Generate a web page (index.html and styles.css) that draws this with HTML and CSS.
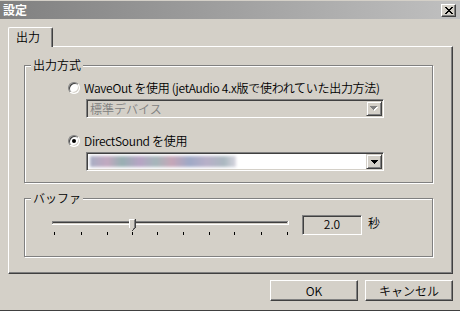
FILE: index.html
```html
<!DOCTYPE html>
<html lang="ja">
<head>
  <meta charset="UTF-8">
  <title>設定</title>
  <link rel="stylesheet" href="styles.css">
</head>
<body>
  <div class="window">
    <div class="titlebar">
      <span class="title">設定</span>
      <span class="close">
        <svg width="8" height="7" viewBox="0 0 8 7" shape-rendering="crispEdges">
          <path d="M0 0h2v1h-2zM6 0h2v1h-2zM1 1h2v1h-2zM5 1h2v1h-2zM2 2h4v1h-4zM3 3h2v1h-2zM2 4h4v1h-4zM1 5h2v1h-2zM5 5h2v1h-2zM0 6h2v1h-2zM6 6h2v1h-2z" fill="#000"/>
        </svg>
      </span>
    </div>
    <div class="content">
      <div class="tabs">
        <div class="tab">出力</div>
      </div>
      <div class="panel">
        <div class="group group-output">
          <span class="group-title">出力方式</span>
          <label class="radio-row"><span class="radio"></span>WaveOut を使用 (jetAudio 4.x版で使われていた出力方法)</label>
          <div class="combo disabled">
            <span class="combo-text">標準デバイス</span>
            <span class="combo-btn">
              <svg width="8" height="5" viewBox="0 0 8 5" shape-rendering="crispEdges">
                <path d="M1 1h7v1h-7zM2 2h5v1h-5zM3 3h3v1h-3zM4 4h1v1h-1z" fill="#fff"/>
                <path d="M0 0h7v1h-7zM1 1h5v1h-5zM2 2h3v1h-3zM3 3h1v1h-1z" fill="#808080"/>
              </svg>
            </span>
          </div>
          <label class="radio-row second"><span class="radio checked"></span>DirectSound を使用</label>
          <div class="combo">
            <span class="combo-text"><span class="blur"></span></span>
            <span class="combo-btn">
              <svg width="7" height="4" viewBox="0 0 7 4" shape-rendering="crispEdges">
                <path d="M0 0h7v1h-7zM1 1h5v1h-5zM2 2h3v1h-3zM3 3h1v1h-1z" fill="#000"/>
              </svg>
            </span>
          </div>
        </div>
        <div class="group group-buffer">
          <span class="group-title">バッファ</span>
          <div class="buffer-row">
            <svg class="slider" width="240" height="22" viewBox="0 0 240 22" shape-rendering="crispEdges">
              <rect x="2" y="5" width="236" height="1" fill="#808080"/>
              <rect x="2" y="5" width="1" height="4" fill="#808080"/>
              <rect x="3" y="6" width="234" height="1" fill="#404040"/>
              <rect x="2" y="8" width="237" height="1" fill="#fff"/>
              <rect x="238" y="5" width="1" height="4" fill="#fff"/>
              <path d="M79 3h6v8l-3 3l-3-3z" fill="#d4d0c8"/>
              <path d="M79 3h5v1h-4v8h-1z" fill="#fff"/>
              <path d="M85 3h1v9h-1zM84 12h1v1h-1zM83 13h1v1h-1zM82 14h1v1h-1z" fill="#404040"/>
              <path d="M84 4h1v8h-1zM83 12h1v1h-1z" fill="#808080"/>
              <g fill="#000">
                <rect x="4" y="16" width="1" height="3"/>
                <rect x="31" y="16" width="1" height="3"/>
                <rect x="57" y="16" width="1" height="3"/>
                <rect x="82" y="16" width="1" height="3"/>
                <rect x="107" y="16" width="1" height="3"/>
                <rect x="133" y="16" width="1" height="3"/>
                <rect x="159" y="16" width="1" height="3"/>
                <rect x="184" y="16" width="1" height="3"/>
                <rect x="211" y="16" width="1" height="3"/>
                <rect x="237" y="16" width="1" height="3"/>
              </g>
            </svg>
            <div class="edit">2.0</div>
            <span class="unit">秒</span>
          </div>
        </div>
      </div>
      <div class="buttons">
        <button class="btn">OK</button>
        <button class="btn">キャンセル</button>
      </div>
    </div>
  </div>
</body>
</html>
```

FILE: styles.css
```css
body {
  margin: 0;
  background: #d4d0c8;
  font-family: "Noto Sans CJK JP", sans-serif;
  font-size: 12px;
  font-weight: 350;
  color: #000;
}
.window {
  width: 460px;
  height: 310px;
  box-sizing: border-box;
  border-bottom: 1px solid #404040;
}
.titlebar {
  margin-top: 1px;
  height: 18px;
  display: flex;
  align-items: center;
  justify-content: space-between;
  padding: 0 4px 0 3px;
  background: linear-gradient(90deg, #808080, #c0c0c0);
}
.title {
  color: #fff;
  font-weight: bold;
  line-height: 18px;
}
.close {
  width: 15px;
  height: 13px;
  box-sizing: border-box;
  display: flex;
  align-items: center;
  justify-content: center;
  background: #d4d0c8;
  border: 1px solid;
  border-color: #fff #404040 #404040 #fff;
  box-shadow: inset -1px -1px #808080;
}
.content {
  padding: 8px 7px 0 8px;
}
.tabs {
  display: flex;
}
.tab {
  position: relative;
  z-index: 1;
  width: 45px;
  height: 20px;
  box-sizing: border-box;
  margin-bottom: -1px;
  padding-left: 7px;
  line-height: 18px;
  background: #d4d0c8;
  border: 1px solid;
  border-color: #fff #404040 transparent #fff;
  border-bottom: none;
  border-radius: 2px 2px 0 0;
  box-shadow: inset -1px 0 #808080;
}
.panel {
  height: 228px;
  box-sizing: border-box;
  padding: 18px 0 0 15px;
  border: 1px solid;
  border-color: #fff #404040 #404040 #fff;
  box-shadow: inset -1px -1px #808080;
}
.group {
  position: relative;
  width: 409px;
  box-sizing: border-box;
  border: 1px solid #808080;
  box-shadow: inset 1px 1px #fff, 1px 1px #fff;
}
.group-output {
  height: 118px;
  padding-top: 15px;
}
.group-buffer {
  height: 59px;
  margin-top: 15px;
  padding-top: 16px;
}
.group-title {
  position: absolute;
  top: -8px;
  left: 6px;
  padding: 0 2px;
  line-height: 14px;
  background: #d4d0c8;
}
.radio-row {
  display: flex;
  align-items: center;
  gap: 4px;
  height: 14px;
  line-height: 14px;
  margin-left: 43px;
  letter-spacing: -0.3px;
}
.radio-row.second {
  margin-top: 16px;
}
.radio {
  position: relative;
  width: 12px;
  height: 12px;
  box-sizing: border-box;
  border-radius: 50%;
  background: #fff;
  border: 1px solid;
  border-color: #808080 #fff #fff #808080;
  box-shadow: inset 1px 1px #404040, inset -1px -1px #d4d0c8;
}
.radio.checked::after {
  content: "";
  position: absolute;
  top: 3px;
  left: 3px;
  width: 4px;
  height: 4px;
  border-radius: 50%;
  background: #000;
}
.combo {
  display: flex;
  width: 298px;
  height: 19px;
  box-sizing: border-box;
  margin: 4px 0 0 61px;
  padding: 1px;
  background: #fff;
  border: 1px solid;
  border-color: #808080 #fff #fff #808080;
  box-shadow: inset 1px 1px #404040, inset -1px -1px #d4d0c8;
}
.combo.disabled {
  background: #d4d0c8;
  color: #808080;
}
.combo-text {
  flex: 1;
  padding-left: 2px;
  line-height: 15px;
  overflow: hidden;
}
.blur {
  display: block;
  width: 146px;
  height: 11px;
  margin-top: 2px;
  background: linear-gradient(90deg, #a8aec4, #c2a9c0 12%, #98b0b2 22%, #b7a4c4 34%, #a5b6ba 45%, #c6a6b8 56%, #9fa9c6 68%, #b8b0c8 80%, #aab8c0 92%, #d8d6e0);
  filter: blur(1.5px);
}
.combo-btn {
  width: 16px;
  height: 15px;
  box-sizing: border-box;
  display: flex;
  align-items: center;
  justify-content: center;
  background: #d4d0c8;
  border: 1px solid;
  border-color: #d4d0c8 #404040 #404040 #d4d0c8;
  box-shadow: inset 1px 1px #fff, inset -1px -1px #808080;
}
.buffer-row {
  display: flex;
  align-items: flex-start;
}
.slider {
  display: block;
  margin: 1px 0 0 25px;
}
.edit {
  width: 60px;
  height: 20px;
  box-sizing: border-box;
  margin-left: 12px;
  text-align: center;
  line-height: 16px;
  background: #d4d0c8;
  border: 1px solid;
  border-color: #808080 #fff #fff #808080;
  box-shadow: inset 1px 1px #404040, inset -1px -1px #d4d0c8;
}
.unit {
  margin-left: 6px;
  line-height: 16px;
}
.buttons {
  display: flex;
  justify-content: flex-end;
  gap: 7px;
  margin-top: 6px;
}
.btn {
  width: 88px;
  height: 21px;
  padding: 0;
  font: inherit;
  color: #000;
  background: #d4d0c8;
  border: 1px solid;
  border-color: #fff #404040 #404040 #fff;
  box-shadow: inset -1px -1px #808080;
}
```
